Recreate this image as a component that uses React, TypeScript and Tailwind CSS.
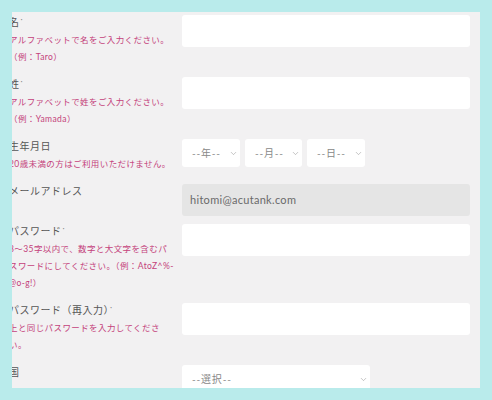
import { ChevronDown } from 'lucide-react'
import type { FC, ReactNode } from 'react'

const Req: FC = () => <sup className="ml-[1px] text-[8px] text-[#888]">·</sup>

const TextInput: FC<{ value?: string; disabled?: boolean }> = ({ value, disabled }) => (
  <div
    className={`h-[32px] w-full rounded-[3px] flex items-center pl-[8px] text-[11px] text-[#6a6a6a] tracking-[0.3px] ${
      disabled ? 'bg-[#e5e5e5]' : 'bg-white'
    }`}
  >
    {value}
  </div>
)

const Select: FC<{ label: string; width: string }> = ({ label, width }) => (
  <div
    className={`h-[28px] ${width} rounded-[3px] bg-white flex items-center justify-between pl-[10px] pr-[2px] text-[10px] text-[#888] tracking-[0.8px]`}
  >
    <span>{label}</span>
    <ChevronDown className="h-[9px] w-[9px] text-[#999]" strokeWidth={1.5} />
  </div>
)

type Row = { label: ReactNode; notes?: string[]; field: ReactNode }

const rows: Row[] = [
  {
    label: (
      <>
        名<Req />
      </>
    ),
    notes: ['アルファベットで名をご入力ください。', '（例：Taro）'],
    field: <TextInput />,
  },
  {
    label: (
      <>
        姓<Req />
      </>
    ),
    notes: ['アルファベットで姓をご入力ください。', '（例：Yamada）'],
    field: <TextInput />,
  },
  {
    label: '生年月日',
    notes: ['20歳未満の方はご利用いただけません。'],
    field: (
      <div className="flex gap-[5px]">
        <Select label="--年--" width="w-[58px]" />
        <Select label="--月--" width="w-[57px]" />
        <Select label="--日--" width="w-[58px]" />
      </div>
    ),
  },
  {
    label: 'メールアドレス',
    field: <TextInput value="hitomi@acutank.com" disabled />,
  },
  {
    label: (
      <>
        パスワード<Req />
      </>
    ),
    notes: [
      '8〜35字以内で、数字と大文字を含むパ',
      'スワードにしてください。（例：AtoZ^%-',
      '@o-g!）',
    ],
    field: <TextInput />,
  },
  {
    label: (
      <>
        パスワード（再入力）<Req />
      </>
    ),
    notes: ['上と同じパスワードを入力してくださ', 'い。'],
    field: <TextInput />,
  },
  {
    label: '国',
    field: <Select label="--選択--" width="w-[188px]" />,
  },
]

export default function App() {
  return (
    <div className="w-[492px] h-[400px] bg-[#b9ebeb] p-[12px] font-['Lato','Noto_Sans_CJK_JP',sans-serif]">
      <div className="h-[376px] bg-[#f2f1f2] overflow-hidden pt-[3px] pr-[10px]">
        {rows.map((row, i) => (
          <div key={i} className="flex items-start pb-[8px]">
            <div className="w-[161px] ml-[-3px] shrink-0 pb-[3px]">
              <div className="text-[10px] leading-[14px] text-[#555] tracking-[0.5px] whitespace-nowrap">
                {row.label}
              </div>
              {row.notes && (
                <div className="mt-[3px] text-[8.5px] leading-[17px] text-[#c4417b] tracking-[0.4px]">
                  {row.notes.map((line, j) => (
                    <div key={j} className="whitespace-nowrap">
                      {line}
                    </div>
                  ))}
                </div>
              )}
            </div>
            <div className="ml-[12px] flex-1">{row.field}</div>
          </div>
        ))}
      </div>
    </div>
  )
}
